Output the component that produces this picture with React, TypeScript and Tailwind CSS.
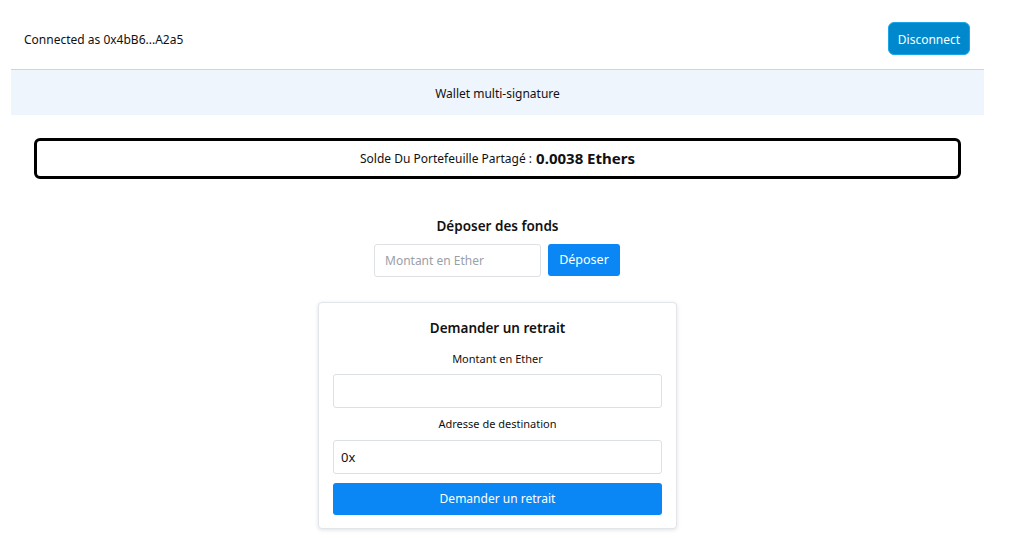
export default function App() {
  return (
    <div className="min-h-[539px] bg-white font-['Noto_Sans',sans-serif] text-[#111]">
      <div className="ml-[11px] w-[973px]">
        <header className="flex h-[69px] items-center justify-between pl-[13px] pr-[14px] pt-[8px]">
          <span className="pt-[3px] text-[12px]">Connected as 0x4bB6...A2a5</span>
          <button className="h-[33px] w-[82px] rounded-[6px] border border-[#1aa6e6] bg-[#0088cc] pt-[2px] text-[12px] text-white">
            Disconnect
          </button>
        </header>
        <div className="flex h-[46px] items-center justify-center border-t border-[#d0d4da] bg-[#eef5fd] pt-[3px] text-[12px]">
          Wallet multi-signature
        </div>

        <div className="mx-[23px] mt-[23px] flex h-[41px] items-center justify-center gap-1 rounded-[6px] border-[3px] border-black">
          <span className="text-[12px]">Solde Du Portefeuille Partagé :</span>
          <span className="text-[15px] font-bold">0.0038 Ethers</span>
        </div>

        <div className="mt-[37px] flex flex-col items-center">
          <h2 className="text-[13.5px] font-semibold">Déposer des fonds</h2>
          <div className="mt-[8px] flex gap-[7px] pr-[1px]">
            <input
              className="h-[33px] w-[167px] rounded-[3px] border border-[#dde0e4] px-[10px] text-[12px] outline-none placeholder:text-[#9aa0a8]"
              placeholder="Montant en Ether"
            />
            <button className="h-[32px] w-[72px] rounded-[3px] bg-[#0a87f5] text-[12.5px] text-white">
              Déposer
            </button>
          </div>

          <div className="mt-[25px] w-[359px] rounded-[4px] border border-[#e2e5e9] bg-white px-[14px] pb-[13px] pt-[15px] shadow-[0_1px_4px_rgba(0,0,0,0.12)]">
            <h3 className="text-center text-[13.5px] font-semibold">Demander un retrait</h3>
            <label className="mt-[12px] block text-center text-[11px]">Montant en Ether</label>
            <input className="mt-[7px] block h-[34px] w-full rounded-[3px] border border-[#dde0e4] px-[7px] text-[13px] outline-none" />
            <label className="mt-[8px] block text-center text-[11px]">Adresse de destination</label>
            <input
              className="mt-[7px] block h-[34px] w-full rounded-[3px] border border-[#dde0e4] px-[7px] text-[13px] outline-none"
              defaultValue="0x"
            />
            <button className="mt-[9px] h-[32px] w-full rounded-[3px] bg-[#0a87f5] text-[12px] text-white">
              Demander un retrait
            </button>
          </div>
        </div>
      </div>
    </div>
  );
}
